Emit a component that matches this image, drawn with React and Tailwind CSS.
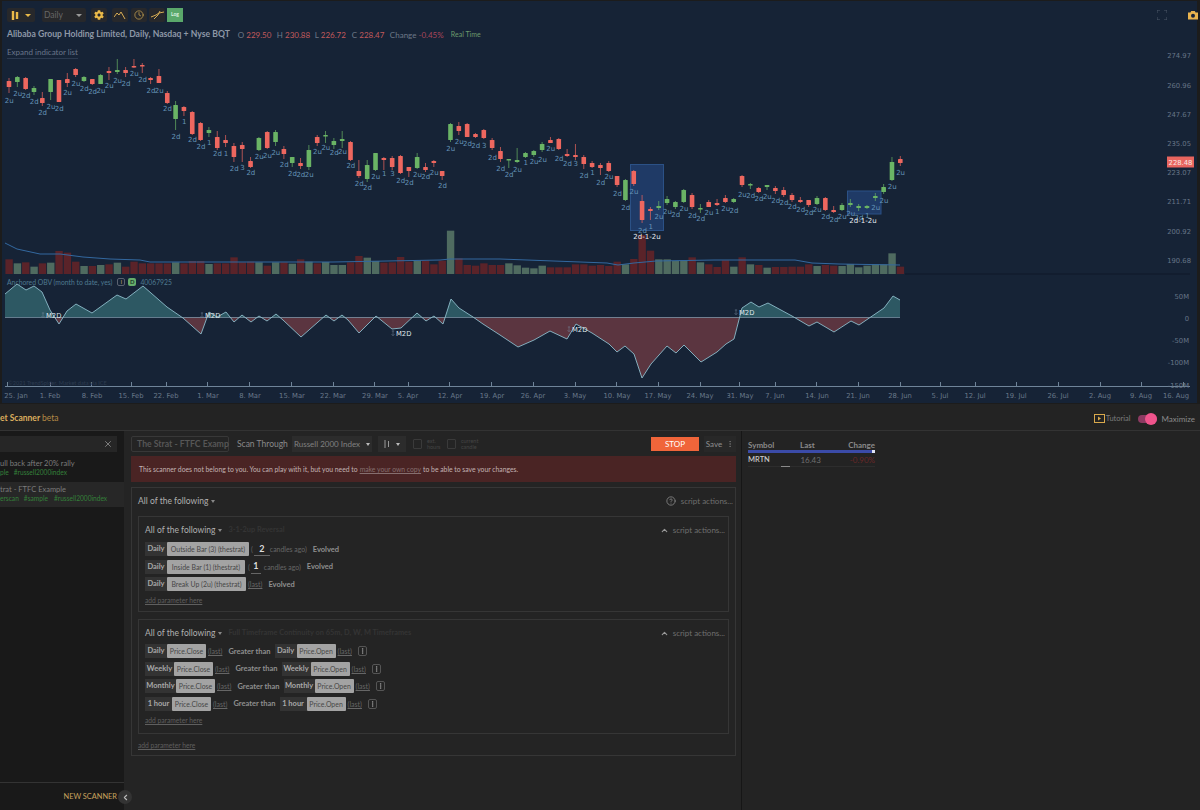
import React from 'react';
import { Clock, CircleHelp, X, ChevronUp, ChevronLeft, EllipsisVertical } from 'lucide-react';
import { FaCog } from 'react-icons/fa';

// [bodyTop, bodyBottom, wickTop, wickBottom, colour, label, labelY]
const candles = [
  [81,87,78,93,'r','2u',101],[77,82,76,87,'g','2u',94],[78,89,77,90,'r','2d',96],[88,92,86,95,'g','2d',102],
  [98,103,92,106,'r','2d',113],[79,92,79,100,'g','2u',107],[80,102,80,102,'r','2d',109],[79,83,73,87,'r','2u',93],
  [69,75,68,77,'r','2u',84],[77,81,76,82,'g','2d',89],[79,84,79,85,'r','2d',92],[75,84,74,84,'g','2u',91],
  [71,73,67,80,'r','2u',86],[70,72,59,74,'g','2u',81],[70,73,67,77,'r','2d',84],[66,67,59,68,'r','2u',74],
  [65,66,63,73,'r','2d',80],[78,80,77,84,'r','2d',91],[76,83,69,83,'r','2u',91],[93,103,91,104,'r','2d',109],
  [105,119,101,130,'g','2d',137],[107,111,106,116,'r','1',122],[112,134,111,135,'r','2d',140],[123,140,122,141,'r','2d',147],
  [130,133,127,137,'g','1',143],[137,148,131,150,'r','2d',154],[140,143,135,147,'r','1',154],[146,157,143,162,'r','2d',169],
  [145,149,142,162,'r','3',168],[161,167,157,168,'r','2d',173],[138,150,137,151,'g','2u',157],[132,148,131,149,'r','2u',156],
  [132,142,130,146,'g','2u',153],[149,154,146,159,'r','2d',165],[157,163,157,167,'g','2d',174],[163,166,158,169,'r','2d',175],
  [150,167,145,170,'g','2u',175],[137,143,135,146,'r','2u',152],[135,136,131,143,'g','2u',148],[141,145,138,149,'g','2d',153],
  [139,141,131,148,'g','2u',152],[142,160,141,161,'r','2d',166],[171,176,160,178,'r','2d',184],[165,179,160,182,'g','2d',188],
  [153,170,153,171,'g','2u',177],[158,160,157,170,'r','1',174],[158,167,156,170,'r','3',174],[156,173,155,174,'r','2d',181],
  [167,171,167,177,'r','2d',183],[157,168,153,169,'g','2u',175],[167,170,163,172,'r','2d',177],[161,163,160,167,'r','2u',173],
  [171,176,171,180,'r','2d',186],[124,140,123,142,'g','2u',149],[126,131,122,135,'r','2u',142],[124,137,123,137,'r','2d',144],
  [134,137,133,138,'r','2d',146],[130,138,129,139,'r','3',146],[140,148,138,150,'r','2d',158],[151,159,147,162,'r','2d',169],
  [159,160,159,168,'g','2d',175],[160,162,148,163,'g','2u',170],[153,157,152,158,'g','1',163],[151,155,150,157,'g','2u',162],
  [144,150,142,152,'g','2u',160],[140,143,137,143,'r','2u',149],[139,149,138,150,'r','2d',159],[154,156,149,157,'r','2d',164],
  [155,157,144,160,'r','3',164],[157,164,155,169,'r','2d',176],[163,167,161,168,'r','1',173],[165,168,163,175,'r','2d',183],
  [163,171,161,172,'r','2u',177],[176,185,176,187,'r','2d',194],[180,200,179,201,'g','2d',208],[171,184,170,186,'r','2u',192],
  [201,220,195,223,'r','2d',231],[209,211,207,220,'r','1',227],[206,208,201,210,'g','2u',217],[199,203,196,205,'g','2u',212],
  [202,207,201,209,'g','2d',215],[190,202,189,203,'g','2u',209],[195,207,193,209,'r','2d',216],[208,209,204,213,'g','2d',219],
  [202,207,200,207,'r','2u',213],[203,205,199,206,'r','1',212],[198,202,195,203,'r','2u',209],[199,202,198,203,'g','2d',211],
  [176,185,175,187,'r','2u',195],[184,185,183,189,'g','2d',196],[188,192,187,193,'r','2d',199],[185,187,185,190,'g','2u',197],
  [188,191,186,194,'r','2d',201],[190,195,187,197,'r','2d',203],[195,200,193,202,'r','2d',207],[200,202,197,203,'r','2d',210],
  [200,205,200,207,'r','2d',213],[198,204,196,205,'g','2u',210],[198,210,197,211,'r','2d',217],[210,212,206,213,'r','2d',220],
  [205,210,203,211,'g','2u',217],[203,205,199,207,'g','2u',214],[206,208,204,211,'g','2d',218],[206,208,205,209,'g','1',216],
  [196,198,193,201,'g','2u',208],[187,192,184,194,'g','2u',201],[162,180,157,181,'g','2u',187],[159,163,156,166,'r','2u',173],
];

// top of each volume bar, then colour
const volumes = [
  [103,'r'],[115,'g'],[112,'r'],[125,'g'],[115,'r'],[113,'g'],[78,'r'],[83,'r'],[110,'r'],[123,'g'],[123,'r'],[120,'g'],
  [118,'r'],[113,'g'],[125,'r'],[110,'r'],[115,'r'],[115,'r'],[115,'r'],[115,'r'],[112,'g'],[115,'r'],[108,'r'],[108,'r'],
  [117,'g'],[115,'r'],[115,'r'],[97,'r'],[112,'r'],[110,'r'],[112,'g'],[122,'r'],[112,'g'],[112,'r'],[116,'g'],[103,'r'],
  [110,'g'],[115,'r'],[111,'g'],[120,'g'],[120,'g'],[112,'r'],[93,'r'],[98,'g'],[108,'g'],[113,'r'],[112,'r'],[96,'r'],
  [110,'r'],[107,'g'],[107,'r'],[118,'r'],[107,'r'],[17,'g'],[100,'r'],[120,'r'],[122,'r'],[115,'r'],[120,'r'],[120,'r'],
  [115,'g'],[121,'g'],[128,'g'],[130,'g'],[122,'g'],[127,'r'],[127,'r'],[127,'r'],[118,'r'],[118,'r'],[122,'r'],[120,'r'],
  [123,'r'],[110,'r'],[118,'g'],[102,'r'],[30,'r'],[77,'r'],[103,'g'],[103,'g'],[108,'g'],[106,'g'],[97,'r'],[112,'g'],
  [118,'r'],[126,'r'],[106,'r'],[125,'g'],[97,'r'],[118,'g'],[120,'r'],[128,'g'],[126,'r'],[126,'r'],[125,'r'],[125,'r'],
  [118,'r'],[123,'g'],[120,'r'],[122,'r'],[123,'g'],[117,'g'],[127,'g'],[122,'g'],[118,'g'],[118,'g'],[85,'g'],[125,'r'],
];

const smaLine = 'M5 243 L17 249 L40 254 L60 254 L83 257 L110 259 L140 260 L150 262 L233 262 L333 262 L440 260 L450 259 L500 259 L607 263 L618 265 L634 263 L656 261 L714 260 L795 260 L812 263 L839 264 L900 265';

const obvPoints = [
  [5,294],[17,284],[26,290],[34,286],[42,292],[50,310],[59,324],[67,311],[76,304],[92,313],[117,295],[126,299],[143,286],
  [167,307],[183,318],[201,334],[209,312],[217,317],[226,312],[234,322],[242,315],[251,322],[259,316],[267,321],[276,314],
  [283,320],[301,337],[326,315],[334,321],[342,315],[348,320],[359,333],[376,316],[392,329],[401,328],[417,313],[426,321],
  [434,316],[443,324],[451,299],[459,308],[473,317],[483,324],[500,335],[518,347],[534,340],[550,331],[567,339],[576,324],
  [592,333],[609,344],[617,352],[625,346],[634,354],[642,378],[651,364],[667,346],[676,353],[684,345],[701,362],[709,357],
  [717,352],[726,344],[734,339],[742,308],[751,302],[759,307],[768,303],[792,316],[809,326],[817,322],[834,332],[851,321],
  [859,325],[884,308],[893,296],[900,300],
];

const xAxis = [
  ['25. Jan',16,7],['1. Feb',50,50],['8. Feb',92,91],['15. Feb',131,131],['22. Feb',166,166],['1. Mar',208,207],['8. Mar',250,249],
  ['15. Mar',292,291],['22. Mar',333,333],['29. Mar',375,374],['5. Apr',408,408],['12. Apr',450,449],['19. Apr',492,491],
  ['26. Apr',533,533],['3. May',575,575],['10. May',617,616],['17. May',658,658],['24. May',700,700],['31. May',740,739],
  ['7. Jun',775,775],['14. Jun',817,816],['21. Jun',858,858],['28. Jun',900,900],['5. Jul',940,940],['12. Jul',975,975],
  ['19. Jul',1016,1016],['26. Jul',1058,1058],['2. Aug',1100,1100],['9. Aug',1141,1141],['16. Aug',1176,1183],
];

const yAxis = [['274.97',58],['260.96',88],['247.67',117],['235.05',146],['223.07',175],['211.71',204],['200.92',234],['190.68',263]];
const obvAxis = [['50M',299],['0',321],['-50M',343],['-100M',365],['-150M',388]];
const anchors = [[43,315],[202,315],[393,333],[569,329],[736,312]];

const candleX = (i) => 9 + i * 8.33;
const labelFont = { fontFamily: '"DejaVu Sans", sans-serif' };

function Chart() {
  const line = obvPoints.map((p, i) => (i ? 'L' : 'M') + p[0] + ' ' + p[1]).join(' ');
  const area = line + ' L900 317 L5 317 Z';
  return (
    <svg className="absolute left-0 top-0 pointer-events-none" width="1200" height="404" viewBox="0 0 1200 404">
      <defs>
        <clipPath id="obvUp"><rect x="0" y="270" width="1200" height="47" /></clipPath>
        <clipPath id="obvDown"><rect x="0" y="317" width="1200" height="70" /></clipPath>
      </defs>

      {/* scan match boxes */}
      <rect x="630.5" y="164.5" width="33" height="66" fill="#1f3a66" stroke="#2b5186" />
      <rect x="847.5" y="191" width="33.5" height="23" fill="#1f3a66" stroke="#2b5186" />

      {volumes.map((v, i) => {
        const top = v[0] / 3 + 225;
        return <rect key={i} x={candleX(i) - 3.6} y={top} width="7.4" height={274 - top} fill={v[1] === 'g' ? '#4f6b60' : '#5a2329'} />;
      })}
      <line x1="905" y1="274" x2="1190" y2="274" stroke="#0f1828" />
      <path d={smaLine} fill="none" stroke="#33689f" strokeWidth="1" />

      {candles.map((c, i) => {
        const x = candleX(i);
        const col = c[4] === 'g' ? '#6ab465' : '#ee675f';
        return (
          <g key={i}>
            <line x1={x} y1={c[2]} x2={x} y2={c[3]} stroke={col} strokeWidth="1" opacity="0.7" />
            <rect x={x - 2.3} y={c[0]} width="4.6" height={Math.max(c[1] - c[0], 1.5)} rx="0.6" fill={col} />
            <text x={x + 0.3} y={c[6] + 2.4} textAnchor="middle" fontSize="7" fill="#6594b8" style={labelFont}>{c[5]}</text>
          </g>
        );
      })}
      <text x="647" y="238.5" textAnchor="middle" fontSize="7" fill="#e8edf2" style={labelFont}>2d-1-2u</text>
      <text x="863" y="222.5" textAnchor="middle" fontSize="7" fill="#e8edf2" style={labelFont}>2d-1-2u</text>

      {/* anchored obv */}
      <path d={area} fill="#2d5863" clipPath="url(#obvUp)" />
      <path d={area} fill="#5b3540" clipPath="url(#obvDown)" />
      <line x1="5" y1="317.5" x2="900" y2="317.5" stroke="#7a93a5" strokeWidth="0.8" />
      <path d={line} fill="none" stroke="#8dbccb" strokeWidth="0.9" />
      {anchors.map((a, i) => (
        <g key={i}>
          <path d={`M${a[0]} ${a[1] - 2.5}v5M${a[0] - 1.2} ${a[1] - 2}h2.4M${a[0] - 1.6} ${a[1] + 1.5}q1.6 2 3.2 0`} fill="none" stroke="#75879a" strokeWidth="0.5" />
          <text x={a[0] + 3} y={a[1] + 2.6} fontSize="6.8" fill="#dfe4e9" style={labelFont}>M2D</text>
        </g>
      ))}

      {/* axes */}
      <line x1="5" y1="386.5" x2="1190" y2="386.5" stroke="#6f8499" />
      {xAxis.map((t) => (
        <g key={t[0]}>
          <line x1={t[2] + 0.5} y1="382" x2={t[2] + 0.5} y2="387" stroke="#6f8499" />
          <text x={t[1]} y="398" textAnchor="middle" fontSize="6.8" fill="#69788a" style={labelFont}>{t[0]}</text>
        </g>
      ))}
      {yAxis.map((t) => (
        <text key={t[0]} x="1191" y={t[1]} textAnchor="end" fontSize="6.8" fill="#667587" style={labelFont}>{t[0]}</text>
      ))}
      {obvAxis.map((t) => (
        <text key={t[0]} x="1189" y={t[1]} textAnchor="end" fontSize="6.8" fill="#667587" style={labelFont}>{t[0]}</text>
      ))}
      <rect x="1167" y="156.5" width="27" height="11" fill="#e8655f" />
      <text x="1180.5" y="164.7" textAnchor="middle" fontSize="6.8" fill="#f8e6e4" style={labelFont}>228.48</text>
      <text x="8" y="385" fontSize="5.6" fill="#2d3c50" style={{ fontFamily: 'Lato, sans-serif' }}>©2021 TrendSpider. Market data via ICE</text>

      {/* camera button */}
      <path d="M1188 12.500h2.400l.8-1.500h3.600l.8 1.500h2.400v7h-10z" fill="#e9b44f" />
      <circle cx="1193" cy="15.800" r="2" fill="#16233a" />
    </svg>
  );
}

function ToolButton({ className = '', children }) {
  return <div className={'h-[14px] flex items-center bg-[#27282b] rounded-[2px] ' + className}>{children}</div>;
}

function Toolbar() {
  return (
    <div className="flex items-center h-[14px] ml-[5px]">
      <ToolButton className="w-[28px] justify-center gap-[6px]">
        <svg width="8" height="9" viewBox="0 0 8 9"><path d="M2 0v9M6 1v7" stroke="#e9b949" strokeWidth="2.4" /></svg>
        <span className="w-0 h-0 border-x-[3px] border-x-transparent border-t-[3px] border-t-[#e9b949]" />
      </ToolButton>
      <ToolButton className="w-[44px] ml-[7px] justify-between pl-[2px] pr-[4px]">
        <span className="text-[8.5px] text-[#666]">Daily</span>
        <span className="w-0 h-0 border-x-[3px] border-x-transparent border-t-[3px] border-t-[#999]" />
      </ToolButton>
      <ToolButton className="w-[16px] ml-[5px] justify-center"><FaCog size={10} color="#e9b949" /></ToolButton>
      <ToolButton className="w-[16px] ml-[5px] justify-center">
        <svg width="12" height="9" viewBox="0 0 12 9" fill="none"><path d="M0 6l3-4 2 2 2-3 4 7" stroke="#d8ad55" strokeWidth="1" /></svg>
      </ToolButton>
      <ToolButton className="w-[16px] ml-[3px] justify-center"><Clock size={10} color="#e4b95a" strokeWidth={1.5} /></ToolButton>
      <ToolButton className="w-[16px] ml-[2px] justify-center">
        <svg width="13" height="10" viewBox="0 0 13 10" fill="none"><path d="M0 7l5-2 3-2 5-1M3 9l4-4 2-4" stroke="#d8ad55" strokeWidth="1" /></svg>
      </ToolButton>
      <div className="w-[16px] h-[14px] ml-[2px] bg-[#5aa86b] flex items-center justify-center text-[5px] font-bold text-[#dff3e2]">Log</div>
      <svg className="ml-auto mr-[30px] shrink-0" width="10" height="10" viewBox="0 0 10 10" fill="none" stroke="#4a5667"><path d="M0 3V0h3M7 0h3v3M10 7v3H7M3 10H0V7" /></svg>
    </div>
  );
}

function ChartHeader() {
  return (
    <div className="flex items-center h-[13px] mt-[6px] ml-[5px] text-[8px] whitespace-nowrap">
      <span className="font-bold text-[8.65px] text-[#8d97a6]">Alibaba Group Holding Limited, Daily, Nasdaq + Nyse BQT</span>
      <span className="ml-[8px] w-[39px] text-[#6d7888]">O <span className="text-[#c25a5c]">229.50</span></span>
      <span className="w-[38px] text-[#6d7888]">H <span className="text-[#c25a5c]">230.88</span></span>
      <span className="w-[37px] text-[#6d7888]">L <span className="text-[#c25a5c]">226.72</span></span>
      <span className="w-[38px] text-[#6d7888]">C <span className="text-[#c25a5c]">228.47</span></span>
      <span className="w-[61px] text-[#6d7888]">Change <span className="text-[#a8465a]">-0.45%</span></span>
      <span className="text-[7px] text-[#6b9a6c]">Real Time</span>
    </div>
  );
}

function Chip({ time, timeW, name, nameW }) {
  return (
    <span className="flex h-[14px] items-center">
      <span className={'h-full flex items-center justify-center bg-[#333] text-[7.5px] font-bold text-[#a8a8a8] ' + timeW}>{time}</span>
      <span className={'h-full flex items-center justify-center bg-[#a3a3a3] rounded-[1px] text-[6.9px] text-[#474747] ' + nameW}>{name}</span>
    </span>
  );
}

const Last = () => <span className="text-[#666] text-[7px] underline">(last)</span>;
const Strong = ({ children }) => <span className="font-bold text-[7.5px] text-[#8f8f8f]">{children}</span>;

function CandleInput({ value, w }) {
  return <span className={'h-[14px] border-b border-[#666] flex items-center justify-center text-[#ddd] text-[9px] font-bold ' + w}>{value}</span>;
}

function CompareRow({ time, timeW }) {
  return (
    <div className="flex items-center h-[14px] text-[7px] leading-[14px] whitespace-nowrap">
      <Chip time={time} timeW={timeW} name="Price.Close" nameW="w-[39px]" />
      <span className="ml-[2px]"><Last /></span>
      <span className="ml-[6px]"><Strong>Greater than</Strong></span>
      <span className="ml-[4px] flex"><Chip time={time} timeW={timeW} name="Price.Open" nameW="w-[39px]" /></span>
      <span className="ml-[2px]"><Last /></span>
      <span className="ml-[6px] w-[9px] h-[10px] rounded-[2px] border border-[#555] flex items-center justify-center">
        <EllipsisVertical size={8} color="#bbb" />
      </span>
    </div>
  );
}

function GroupHeader({ name }) {
  return (
    <div className="flex items-center h-[12px] text-[8.5px] whitespace-nowrap">
      <span className="text-[#b0b0b0]">All of the following</span>
      <span className="ml-[3px] w-0 h-0 border-x-[2.5px] border-x-transparent border-t-[3px] border-t-[#888]" />
      <span className="ml-[6px] text-[7.4px] font-bold text-[#343434]">{name}</span>
      <ChevronUp className="ml-auto" size={9} color="#999" strokeWidth={3} />
      <span className="ml-[4px] text-[8px] text-[#6f6f6f]">script actions...</span>
    </div>
  );
}

const AddParameter = () => <div className="text-[6.7px] leading-[10px] text-[#5f5f5f] underline">add parameter here</div>;

function ReversalGroup() {
  return (
    <div className="mt-[9px] h-[96px] border border-[#363636] pt-[7px] pl-[6px] pr-[3px]">
      <GroupHeader name="3-1-2up Reversal" />
      <div className="mt-[6px] flex flex-col gap-[3.6px] text-[6.9px] leading-[14px] whitespace-nowrap">
        <div className="flex items-center h-[14px]">
          <Chip time="Daily" timeW="w-[22px]" name="Outside Bar (3) (thestrat)" nameW="w-[82px]" />
          <span className="ml-[2px] text-[#666]">(</span>
          <span className="ml-[1px]"><CandleInput value="2" w="w-[16px]" /></span>
          <span className="text-[#666]">candles ago)</span>
          <span className="ml-[6px]"><Strong>Evolved</Strong></span>
        </div>
        <div className="flex items-center h-[14px]">
          <Chip time="Daily" timeW="w-[22px]" name="Inside Bar (1) (thestrat)" nameW="w-[78px]" />
          <span className="ml-[3px] text-[#666]">(</span>
          <span className="ml-[1px]"><CandleInput value="1" w="w-[10px]" /></span>
          <span className="ml-[3px] text-[#666]">candles ago)</span>
          <span className="ml-[6px]"><Strong>Evolved</Strong></span>
        </div>
        <div className="flex items-center h-[14px]">
          <Chip time="Daily" timeW="w-[22px]" name="Break Up (2u) (thestrat)" nameW="w-[79px]" />
          <span className="ml-[2px]"><Last /></span>
          <span className="ml-[6px]"><Strong>Evolved</Strong></span>
        </div>
      </div>
      <div className="mt-[4px]"><AddParameter /></div>
    </div>
  );
}

function ContinuityGroup() {
  return (
    <div className="mt-[7px] h-[115px] border border-[#363636] pt-[7px] pl-[6px] pr-[3px]">
      <GroupHeader name="Full Timeframe Continuity on 65m, D, W, M Timeframes" />
      <div className="mt-[5px] flex flex-col gap-[3.6px]">
        <CompareRow time="Daily" timeW="w-[22px]" />
        <CompareRow time="Weekly" timeW="w-[29px]" />
        <CompareRow time="Monthly" timeW="w-[31px]" />
        <CompareRow time="1 hour" timeW="w-[27px]" />
      </div>
      <div className="mt-[4px]"><AddParameter /></div>
    </div>
  );
}

function Sidebar() {
  return (
    <div className="w-[124px] bg-[#191919] flex flex-col shrink-0 relative">
      <div className="mt-[5px] mr-[7px] h-[16px] bg-[#262626] flex items-center justify-end pr-[4px]"><X size={10} color="#8d8d8d" /></div>
      <div className="h-[30px] pt-[7px] text-[7.5px] leading-[9px] whitespace-nowrap">
        <div className="text-[#7c7c7c]">ull back after 20% rally</div>
        <div className="text-[#34803a] text-[6.6px]">ple<span className="ml-[5px]">#russell2000index</span></div>
      </div>
      <div className="h-[25px] pt-[3px] bg-[#272727] text-[7.5px] leading-[9px] whitespace-nowrap">
        <div className="text-[#7c7c7c]">trat - FTFC Example</div>
        <div className="text-[#34803a] text-[6.6px]">erscan<span className="ml-[5px]">#sample</span><span className="ml-[6px]">#russell2000index</span></div>
      </div>
      <div className="mt-auto h-[28px] border-t border-[#333] flex items-center justify-end pr-[7px] text-[7.4px] text-[#c9a35f]">NEW SCANNER</div>
      <div className="absolute right-[-8px] bottom-[6px] w-[14px] h-[14px] rounded-full bg-[#333] flex items-center justify-center">
        <ChevronLeft size={9} color="#bbb" strokeWidth={3} />
      </div>
    </div>
  );
}

function ScannerForm() {
  return (
    <div className="flex-1 pl-[7px] pr-[5px] bg-[#242424]">
      <div className="flex items-center h-[16px] mt-[5px] text-[8.5px] whitespace-nowrap">
        <div className="w-[98px] h-full border border-[#383838] rounded-[2px] px-[5px] flex items-center text-[8.7px] font-bold text-[#565656]">The Strat - FTFC Examp</div>
        <span className="ml-[8px] text-[#8a8a8a]">Scan Through</span>
        <div className="ml-[4px] w-[80px] h-full bg-[#2c2c2c] flex items-center pl-[2px] gap-[6px] text-[8px] text-[#808080]">
          Russell 2000 Index
          <span className="w-0 h-0 border-x-[2.5px] border-x-transparent border-t-[3px] border-t-[#bbb]" />
        </div>
        <div className="ml-[6px] w-[28px] h-full bg-[#2c2c2c] flex items-center justify-center gap-[6px]">
          <svg width="6" height="8" viewBox="0 0 6 8"><path d="M1 0v8M4.5 1v6" stroke="#999" strokeWidth="1" /></svg>
          <span className="w-0 h-0 border-x-[2.5px] border-x-transparent border-t-[3px] border-t-[#bbb]" />
        </div>
        <div className="ml-[7px] w-[9px] h-[10px] border border-[#3a3a3a] rounded-[1px]" />
        <div className="ml-[5px] w-[16px] text-[5.5px] leading-[6px] text-[#444] whitespace-normal">ext. hours</div>
        <div className="ml-[4px] w-[9px] h-[10px] border border-[#3a3a3a] rounded-[1px]" />
        <div className="ml-[5px] w-[20px] text-[5.5px] leading-[6px] text-[#444] whitespace-normal">current candle</div>
        <div className="ml-auto w-[48px] h-[14px] bg-[#f0653a] flex items-center justify-center text-white text-[8px]">STOP</div>
        <div className="ml-[5px] w-[32px] h-full bg-[#282828] flex items-center justify-center gap-[4px] text-[#8f8f8f] text-[8px]">
          Save
          <EllipsisVertical size={8} color="#777" />
        </div>
      </div>
      <div className="mt-[4px] h-[26px] bg-[#4a2424] flex items-center px-[8px] text-[6.8px] text-[#c2b3b3] whitespace-nowrap">
        This scanner does not belong to you. You can play with it, but you need to
        <span className="mx-[2px] text-[#866f6f] underline">make your own copy</span>
        to be able to save your changes.
      </div>
      <div className="mt-[5px] h-[269px] border border-[#363636] pl-[6px] pt-[7px]">
        <div className="flex items-center h-[12px] pr-[2px] text-[8.5px] whitespace-nowrap">
          <span className="text-[#b0b0b0]">All of the following</span>
          <span className="ml-[3px] w-0 h-0 border-x-[2.5px] border-x-transparent border-t-[3px] border-t-[#888]" />
          <CircleHelp className="ml-auto" size={10} color="#888" />
          <span className="ml-[5px] text-[8px] text-[#6f6f6f]">script actions...</span>
        </div>
        <div className="pr-[6px]">
          <ReversalGroup />
          <ContinuityGroup />
          <div className="mt-[6px]"><AddParameter /></div>
        </div>
      </div>
    </div>
  );
}

function Results() {
  return (
    <div className="w-[459px] shrink-0 border-l border-[#161616] pl-[6px] pt-[8px] bg-[#232323]">
      <div className="w-[127px] text-[8px] whitespace-nowrap">
        <div className="flex font-bold text-[#8a8a8a] h-[11px] items-center">
          <span className="w-[53px]">Symbol</span>
          <span className="w-[49px]">Last</span>
          <span>Change</span>
        </div>
        <div className="h-[3px] bg-[#3b4ba8] flex justify-end"><span className="w-[3px] h-[3px] bg-[#dfe3f5]" /></div>
        <div className="flex h-[13px] items-center">
          <span className="w-[53px] font-semibold text-[#c8c8c8] text-[7.5px]">MRTN</span>
          <span className="w-[50px] text-[#6e6e6e]">16.43</span>
          <span className="text-[#6a2828]">-0.90%</span>
        </div>
        <div className="h-px bg-[#2d2d2d]"><div className="ml-[33px] w-[9px] h-px bg-[#8a8a8a]" /></div>
      </div>
    </div>
  );
}

export default function App() {
  return (
    <div className="w-[1200px] h-[810px] overflow-hidden bg-[#1c1c1c]" style={{ fontFamily: 'Lato, sans-serif' }}>
      <div className="relative h-[404px] pl-[2px] pr-[3px] pt-[1px] pb-[1px]">
        <div className="h-full bg-[#162336] pt-[7px]">
          <Toolbar />
          <ChartHeader />
          <div className="mt-[6px] ml-[5px] text-[8px] leading-[11px] text-[#69758a] border-b border-[#2c3a50] w-fit">Expand indicator list</div>
          <div className="mt-[218px] ml-[5px] flex items-center h-[10px] text-[6.8px] text-[#4f7a90] whitespace-nowrap">
            <span>Anchored OBV (month to date, yes)</span>
            <span className="ml-[5px] w-[8px] h-[8px] rounded-[2px] border border-[#5a6270] text-[6px] leading-[6px] text-center text-[#b59a63]">I</span>
            <span className="ml-[3px] w-[8px] h-[8px] rounded-[2px] bg-[#66ae6b] text-[6px] leading-[8px] text-center font-bold text-[#1f3a2a]">D</span>
            <span className="ml-[4px]">40067925</span>
          </div>
        </div>
        <Chart />
      </div>
      <div className="h-[406px] flex flex-col bg-[#232323]">
        <div className="h-[27px] pt-[3px] shrink-0 flex items-center border-b border-[#333] text-[8.5px] whitespace-nowrap">
          <span className="font-bold text-[#dcae5e]">et Scanner</span>
          <span className="ml-[2px] text-[#b58a45]">beta</span>
          <svg className="ml-auto" width="11" height="9" viewBox="0 0 11 9" fill="none"><rect x="0.5" y="0.5" width="10" height="8" stroke="#d9a94c" /><path d="M4 2.5v4l3-2z" fill="#d9a94c" /></svg>
          <span className="ml-[1px] text-[#7b7b7b] text-[7.5px]">Tutorial</span>
          <span className="relative ml-[7px] w-[19px] h-[8px] rounded-full bg-[#8d3a62]">
            <span className="absolute right-0 top-[-2px] w-[12px] h-[12px] rounded-full bg-[#f0548c]" />
          </span>
          <span className="ml-[5px] mr-[5px] text-[#8a8a8a] text-[8px]">Maximize</span>
        </div>
        <div className="flex flex-1">
          <Sidebar />
          <ScannerForm />
          <Results />
        </div>
      </div>
    </div>
  );
}
